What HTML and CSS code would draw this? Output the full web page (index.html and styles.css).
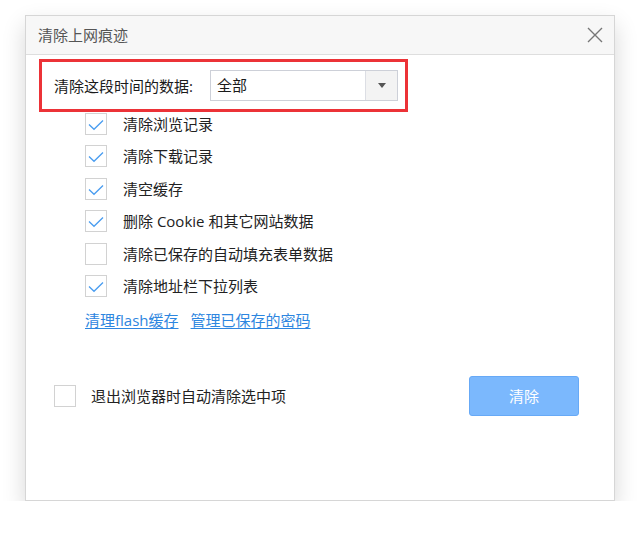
FILE: index.html
```html
<!DOCTYPE html>
<html lang="zh-CN">
<head>
<meta charset="utf-8">
<title>清除上网痕迹</title>
<link rel="stylesheet" href="styles.css">
</head>
<body>
<div class="dialog">
  <div class="titlebar">
    <span class="title">清除上网痕迹</span>
    <svg class="close" width="16" height="16" viewBox="0 0 16 16"><path d="M1 1 L15 15 M15 1 L1 15" stroke="#777" stroke-width="1.4" fill="none"/></svg>
  </div>
  <div class="content">
    <div class="range">
      <span class="range-label">清除这段时间的数据:</span>
      <div class="select">
        <span class="select-value">全部</span>
        <span class="select-btn"><svg width="8" height="5" viewBox="0 0 8 5"><path d="M0 0 H8 L4 5 Z" fill="#555"/></svg></span>
      </div>
    </div>
    <ul class="options">
      <li class="option"><span class="box"><svg width="22" height="22" viewBox="0 0 22 22"><path d="M4 11.5 L9 16.3 L18 7.5" stroke="#4a9df0" stroke-width="1.3" fill="none"/></svg></span><span>清除浏览记录</span></li>
      <li class="option"><span class="box"><svg width="22" height="22" viewBox="0 0 22 22"><path d="M4 11.5 L9 16.3 L18 7.5" stroke="#4a9df0" stroke-width="1.3" fill="none"/></svg></span><span>清除下载记录</span></li>
      <li class="option"><span class="box"><svg width="22" height="22" viewBox="0 0 22 22"><path d="M4 11.5 L9 16.3 L18 7.5" stroke="#4a9df0" stroke-width="1.3" fill="none"/></svg></span><span>清空缓存</span></li>
      <li class="option"><span class="box"><svg width="22" height="22" viewBox="0 0 22 22"><path d="M4 11.5 L9 16.3 L18 7.5" stroke="#4a9df0" stroke-width="1.3" fill="none"/></svg></span><span>删除 Cookie 和其它网站数据</span></li>
      <li class="option"><span class="box"></span><span>清除已保存的自动填充表单数据</span></li>
      <li class="option"><span class="box"><svg width="22" height="22" viewBox="0 0 22 22"><path d="M4 11.5 L9 16.3 L18 7.5" stroke="#4a9df0" stroke-width="1.3" fill="none"/></svg></span><span>清除地址栏下拉列表</span></li>
    </ul>
    <div class="links">
      <a class="link" href="#">清理flash缓存</a>
      <a class="link" href="#">管理已保存的密码</a>
    </div>
  </div>
  <div class="footer">
    <label class="auto"><span class="box"></span><span>退出浏览器时自动清除选中项</span></label>
    <button class="btn">清除</button>
  </div>
</div>
</body>
</html>
```
FILE: styles.css
```css
html, body {
  margin: 0;
  padding: 0;
  background: #fff;
}
body {
  font-family: "Open Sans", "Noto Sans CJK SC", "Microsoft YaHei", sans-serif;
  font-size: 15px;
  color: #222;
}
.dialog {
  margin: 15px 0 0 25px;
  width: 590px;
  height: 486px;
  box-sizing: border-box;
  border: 1px solid #d6d6d6;
  background: #fff;
  box-shadow: 0 10px 22px rgba(0, 0, 0, 0.16);
  display: flex;
  flex-direction: column;
}
.titlebar {
  height: 38px;
  flex: none;
  background: #f7f7f7;
  border-bottom: 1px solid #dedede;
  display: flex;
  align-items: center;
  justify-content: space-between;
  padding: 0 11px 0 12px;
}
.title {
  color: #555;
  line-height: 20px;
}
.close {
  display: block;
}
.content {
  padding: 4px 0 0 13px;
}
.range {
  width: 369px;
  height: 53px;
  box-sizing: border-box;
  border: 3px solid #ec3237;
  display: flex;
  align-items: center;
  padding: 0 7px 0 12px;
}
.range-label {
  line-height: 20px;
  color: #1a1a1a;
}
.select {
  margin-left: auto;
  width: 188px;
  height: 31px;
  box-sizing: border-box;
  border: 1px solid #cdd0d8;
  display: flex;
  background: #fff;
}
.select-value {
  flex: 1;
  padding-left: 6px;
  line-height: 29px;
  color: #1a1a1a;
}
.select-btn {
  width: 31px;
  border-left: 1px solid #dcdee4;
  background: #f3f3f3;
  display: flex;
  align-items: center;
  justify-content: center;
}
.select-btn svg {
  display: block;
}
.options {
  list-style: none;
  margin: 1px 0 0 46px;
  padding: 0;
  display: flex;
  flex-direction: column;
  gap: 10.4px;
}
.option {
  display: flex;
  align-items: center;
  gap: 16px;
  height: 22px;
  line-height: 20px;
}
.box {
  width: 22px;
  height: 22px;
  box-sizing: border-box;
  border: 1px solid #d2d2d2;
  background: #fff;
  flex: none;
  position: relative;
}
.box svg {
  position: absolute;
  left: -1px;
  top: -1px;
  display: block;
}
.links {
  margin: 13px 0 0 46px;
  display: flex;
  gap: 12px;
  line-height: 20px;
}
.link {
  color: #2d86e0;
  text-decoration: underline;
  text-underline-offset: 2px;
}
.footer {
  margin-top: 46px;
  padding: 0 35px 0 28px;
  display: flex;
  align-items: center;
  justify-content: space-between;
}
.auto {
  display: flex;
  align-items: center;
  gap: 15px;
  line-height: 20px;
}
.btn {
  width: 110px;
  height: 40px;
  box-sizing: border-box;
  border: 1px solid #67a9f6;
  border-radius: 3px;
  background: #7bb8fd;
  color: #fff;
  font-family: inherit;
  font-size: 15px;
  padding: 0;
}
```
